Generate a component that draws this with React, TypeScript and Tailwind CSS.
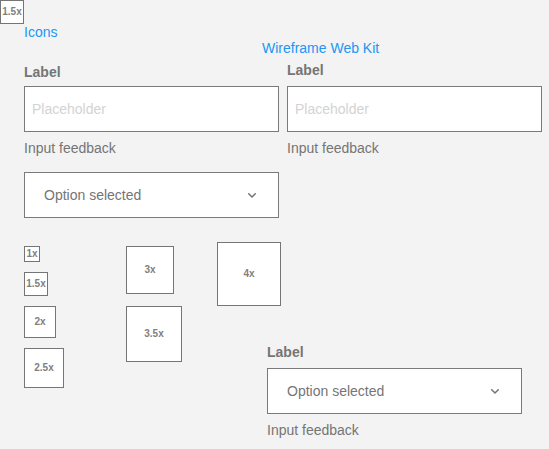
import React from "react";

function Chevron() {
  return (
    <svg width="8" height="5" viewBox="0 0 8 5" fill="none">
      <path d="M0.75 0.75 L4 4 L7.25 0.75" stroke="#757575" strokeWidth="1.5" strokeLinecap="round" strokeLinejoin="round" />
    </svg>
  );
}

function Box({ size, label }: { size: string; label: string }) {
  return (
    <div className={`${size} flex items-center justify-center border border-[#757575] bg-white text-[10px] font-bold leading-none text-[#808080]`}>
      {label}
    </div>
  );
}

function Field({ placeholder }: { placeholder: string }) {
  return (
    <div className="flex w-[255px] flex-col">
      <div className="text-[14px] font-bold leading-[16px] text-[#757575]">Label</div>
      <div className="mt-[6px] flex h-[46px] items-center border border-[#7a7a7a] bg-white pl-[7px] text-[14px] text-[#d3d3d3]">
        {placeholder}
      </div>
      <div className="mt-2 text-[14px] leading-[16px] text-[#757575]">Input feedback</div>
    </div>
  );
}

function Select() {
  return (
    <div className="flex h-[46px] w-[255px] items-center justify-between border border-[#7a7a7a] bg-white pl-[19px] pr-[22px] text-[14px] text-[#757575]">
      <span>Option selected</span>
      <Chevron />
    </div>
  );
}

export default function App() {
  return (
    <div className="min-h-[449px] w-[549px] bg-[#f3f3f3] font-['Liberation_Sans',Arial,sans-serif]">
      <div className="flex h-[24px] w-[24px] items-center justify-center border border-[#757575] bg-white text-[10px] font-bold leading-none text-[#808080]">
        1.5x
      </div>
      <div className="ml-[24px] text-[14px] leading-[16px] text-[#2196f3]">Icons</div>
      <div className="ml-[262px] text-[14px] leading-[16px] text-[#2196f3]">Wireframe Web Kit</div>

      <div className="mt-[6px] flex items-start">
        <div className="ml-[24px] mt-[2px]">
          <Field placeholder="Placeholder" />
        </div>
        <div className="ml-[8px]">
          <div className="flex w-[255px] flex-col">
            <div className="text-[14px] font-bold leading-[16px] text-[#757575]">Label</div>
            <div className="mt-[8px] flex h-[46px] items-center border border-[#7a7a7a] bg-white pl-[7px] text-[14px] text-[#d3d3d3]">
              Placeholder
            </div>
            <div className="mt-2 text-[14px] leading-[16px] text-[#757575]">Input feedback</div>
          </div>
        </div>
      </div>

      <div className="ml-[24px] mt-[16px]">
        <Select />
      </div>

      <div className="mt-[24px] flex items-start">
        <div className="ml-[24px] mt-[4px] flex w-[40px] flex-col gap-[10px]">
          <Box size="h-[16px] w-[16px]" label="1x" />
          <Box size="h-[24px] w-[24px]" label="1.5x" />
          <Box size="h-[32px] w-[32px]" label="2x" />
          <Box size="h-[40px] w-[40px]" label="2.5x" />
        </div>
        <div className="ml-[62px] mt-[4px] flex w-[56px] flex-col gap-[12px]">
          <Box size="h-[48px] w-[48px]" label="3x" />
          <Box size="h-[56px] w-[56px]" label="3.5x" />
        </div>
        <div className="ml-[35px] flex flex-col">
          <Box size="h-[64px] w-[64px]" label="4x" />
          <div className="ml-[50px] mt-[38px] flex w-[255px] flex-col">
            <div className="text-[14px] font-bold leading-[16px] text-[#757575]">Label</div>
            <div className="mt-[8px]">
              <Select />
            </div>
            <div className="mt-2 text-[14px] leading-[16px] text-[#757575]">Input feedback</div>
          </div>
        </div>
      </div>
    </div>
  );
}
